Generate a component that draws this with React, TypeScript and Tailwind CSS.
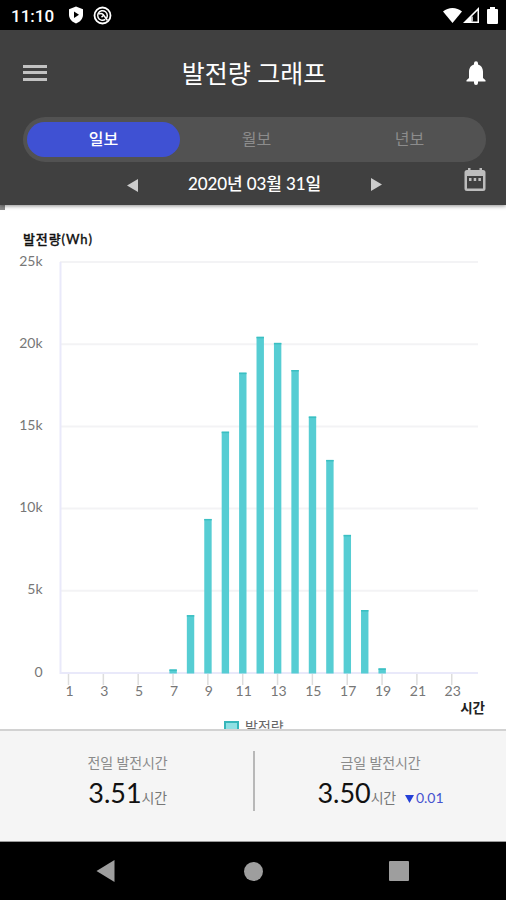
import { ReactNode, useState } from 'react';

const hourly = [
  { hour: 7, wh: 215 },
  { hour: 8, wh: 3520 },
  { hour: 9, wh: 9370 },
  { hour: 10, wh: 14680 },
  { hour: 11, wh: 18270 },
  { hour: 12, wh: 20450 },
  { hour: 13, wh: 20080 },
  { hour: 14, wh: 18430 },
  { hour: 15, wh: 15600 },
  { hour: 16, wh: 12960 },
  { hour: 17, wh: 8400 },
  { hour: 18, wh: 3830 },
  { hour: 19, wh: 280 },
];

const yTicks = [
  { value: 25000, label: '25k' },
  { value: 20000, label: '20k' },
  { value: 15000, label: '15k' },
  { value: 10000, label: '10k' },
  { value: 5000, label: '5k' },
  { value: 0, label: '0' },
];

const xTicks = [1, 3, 5, 7, 9, 11, 13, 15, 17, 19, 21, 23];

const tabs = ['일보', '월보', '년보'];

const xOf = (hour: number) => 68.5 + (hour - 1) * 17.42;
const yOf = (wh: number) => 468 - (wh / 25000) * 411;

const StatusBar = () => (
  <div className="flex h-[30px] shrink-0 items-center justify-between bg-black pl-[11px] pr-2 text-white">
    <div className="flex items-center">
      <span className="w-[43px] whitespace-nowrap pt-[3px] font-['Roboto'] text-[17px] font-medium leading-none">11:10</span>
      <svg className="ml-[14px] h-[18px] w-4" viewBox="0 0 16 18">
        <path d="M8 .5 15 3.2v5.6c0 4-3 7.3-7 8.7-4-1.4-7-4.7-7-8.7V3.2z" fill="#fff" />
        <path d="m6 5.6 5 3.2-5 3.2z" fill="#000" />
      </svg>
      <svg className="ml-[9px] h-[19px] w-[19px]" viewBox="0 0 19 19" fill="none" stroke="#fff">
        <circle cx="9.5" cy="9.5" r="8" strokeWidth="1.8" />
        <path d="M12.300 13.400A4.800 4.800 0 1 1 14.300 9.500c0 1.200-.3 2-.9 2.800" strokeWidth="1.500" />
        <path d="M6 8.200c1.500-1.200 3-.8 4.200.3L14.500 14.500M8.500 11.200l2.500-2.400" strokeWidth="1.500" />
      </svg>
    </div>
    <div className="flex items-center">
      <svg className="h-4 w-[19px]" viewBox="0 0 19 16">
        <path d="M0 4.5C5.300-.3 13.700-.3 19 4.500L9.500 16z" fill="#fff" />
      </svg>
      <svg className="ml-px h-4 w-4" viewBox="0 0 16 16">
        <path d="M16 0v16H0zM14.500 3.700 8.700 9.500v4.900h5.800z" fill="#fff" fillRule="evenodd" />
        <path d="M8.700 9.500h1.300v5H8.700z" fill="#fff" opacity="0.7" />
      </svg>
      <svg className="ml-2 h-[17px] w-[11px]" viewBox="0 0 11 17">
        <path d="M3 0h5v2h2a1 1 0 0 1 1 1v13a1 1 0 0 1-1 1H1a1 1 0 0 1-1-1V3a1 1 0 0 1 1-1h2z" fill="#fff" />
      </svg>
    </div>
  </div>
);

interface HeaderProps {
  active: number;
  onChange: (index: number) => void;
}

const Header = ({ active, onChange }: HeaderProps) => (
  <header className="relative z-10 flex h-[175px] shrink-0 flex-col bg-[#404040] shadow-[0_1px_4px_rgba(0,0,0,0.45)]">
    <div className="grid h-[87px] grid-cols-[1fr_auto_1fr] items-center pb-[2px] pl-[23px] pr-5">
      <button aria-label="메뉴" className="flex w-6 flex-col gap-[3.5px]">
        <span className="h-[3px] w-6 bg-[#c2c2c2]" />
        <span className="h-[3px] w-6 bg-[#c2c2c2]" />
        <span className="h-[3px] w-6 bg-[#c2c2c2]" />
      </button>
      <h1 className="mr-px whitespace-nowrap pt-px text-[25px] font-normal leading-none text-white">발전량 그래프</h1>
      <button aria-label="알림" className="justify-self-end">
        <svg className="h-6 w-5" viewBox="0 0 20 24">
          <path
            d="M10 24a2 2 0 0 0 2-2V20.500h7.500v-1.200L17 17v-6.200c0-3.700-1.800-6.600-5-7.400V2.300a2 2 0 0 0-4 0v1.100c-3.200.8-5 3.700-5 7.400V17L.5 19.300v1.200H8V22a2 2 0 0 0 2 2z"
            fill="#fff"
          />
        </svg>
      </button>
    </div>
    <div className="ml-[23px] flex h-[45px] w-[463px] rounded-full bg-[#525252] py-[5px] pl-1">
      {tabs.map((tab, i) => (
        <button
          key={tab}
          onClick={() => onChange(i)}
          className={`flex-1 rounded-full pb-px text-[16px] leading-none ${
            active === i ? 'bg-[#3f51d3] font-medium text-white' : 'text-[#8c8c8c]'
          }`}
        >
          {tab}
        </button>
      ))}
    </div>
    <div className="grid h-[43px] grid-cols-[1fr_auto_1fr] items-center pl-[23px] pr-5">
      <button aria-label="이전" className="mr-[50px] mt-[3px] justify-self-end">
        <svg className="h-[13px] w-[11px]" viewBox="0 0 11 13">
          <path d="M11 0v13L0 6.500z" fill="#ccc" />
        </svg>
      </button>
      <span className="whitespace-nowrap text-[17px] font-medium leading-none tracking-[-0.1px] text-white">2020년 03월 31일</span>
      <div className="flex items-center justify-between pl-[50px]">
        <button aria-label="다음" className="mt-[2px]">
          <svg className="h-[13px] w-[11px]" viewBox="0 0 11 13">
            <path d="M0 0v13L11 6.500z" fill="#ccc" />
          </svg>
        </button>
        <button aria-label="달력" className="-mt-[7px]">
          <svg className="h-6 w-[22px]" viewBox="0 0 22 24">
            <path
              d="M4 0h2.500v2h9V0H18v2h1a2.500 2.500 0 0 1 2.500 2.500v16A2.500 2.500 0 0 1 19 23H3A2.500 2.500 0 0 1 .5 20.500v-16A2.500 2.500 0 0 1 3 2h1zM3 8v12.500h16V8z"
              fill="#bdbdbd"
              fillRule="evenodd"
            />
            <path d="M5 10h2.500v3H5zM9.700 10h2.500v3H9.700zM14.400 10h2.500v3h-2.500z" fill="#bdbdbd" />
          </svg>
        </button>
      </div>
    </div>
  </header>
);

const Chart = () => (
  <main className="relative h-[524px] shrink-0 overflow-hidden bg-white">
    <svg width="506" height="524" viewBox="0 0 506 524">
      <rect x="0" y="0" width="5" height="5" fill="#8a8a8a" />
      <text x="23" y="39" fontSize="13" fontWeight="500" textLength="69" stroke="#111" strokeWidth="0.3" fill="#111">
        발전량(Wh)
      </text>
      {yTicks.map((t) => (
        <g key={t.value}>
          {t.value > 0 && <path d={`M60 ${yOf(t.value)}H478`} stroke="#f3f3f5" strokeWidth="2" />}
          <text x="42.5" y={yOf(t.value) + 3.5} textAnchor="end" fontSize="14" fill="#777">
            {t.label}
          </text>
        </g>
      ))}
      <path d="M60.500 57V468H478" fill="none" stroke="#e9e9fa" strokeWidth="2" />
      {xTicks.map((h) => (
        <g key={h}>
          <path d={`M${xOf(h)} 469V480`} stroke="#ddd" strokeWidth="1.5" />
          <text x={xOf(h) + 1} y="491" textAnchor="middle" fontSize="14" fill="#777">
            {h}
          </text>
        </g>
      ))}
      {hourly.map(({ hour, wh }) => (
        <g key={hour}>
          <rect x={xOf(hour) - 3.600} y={yOf(wh)} width="7.400" height={468.500 - yOf(wh)} fill="#56cdd3" />
          <rect x={xOf(hour) - 3.600} y={yOf(wh)} width="7.400" height="1.500" fill="#3bbfc2" />
        </g>
      ))}
      <text x="485" y="508" textAnchor="end" fontSize="13.500" fontWeight="700" fill="#222">
        시간
      </text>
      {/* the legend runs under the summary panel */}
      <rect x="225" y="517" width="13" height="13" fill="#8ee0e3" stroke="#35b6ba" strokeWidth="2" />
      <text x="245" y="527" fontSize="14" fill="#666">
        발전량
      </text>
    </svg>
  </main>
);

interface SummaryProps {
  label: string;
  value: string;
  children?: ReactNode;
}

const Summary = ({ label, value, children }: SummaryProps) => (
  <div className="flex flex-1 flex-col items-center pt-[23px]">
    <span className="text-[14px] leading-[18px] tracking-[-0.1px] text-[#8a8a8a]">{label}</span>
    <div className="mt-1 flex items-baseline leading-[34px]">
      <span className="text-[27px] text-[#111]">{value}</span>
      <span className="text-[14px] tracking-[-0.3px] text-[#777]">시간</span>
      {children}
    </div>
  </div>
);

const NavBar = () => (
  <nav className="flex h-[58px] shrink-0 items-center justify-between bg-black pl-[96px] pr-[97px]">
    <svg className="h-[22px] w-[19px]" viewBox="0 0 19 22">
      <path d="M18.500 0v22L.5 11z" fill="#9e9e9e" />
    </svg>
    <span className="ml-[2px] h-[19px] w-[19px] rounded-full bg-[#9e9e9e]" />
    <span className="h-[20px] w-5 rounded-[1px] bg-[#9e9e9e]" />
  </nav>
);

export default function App() {
  const [active, setActive] = useState(0);

  return (
    <div className="flex h-[900px] w-[506px] flex-col overflow-hidden bg-white font-['Lato','Noto_Sans_CJK_KR',sans-serif]">
      <StatusBar />
      <Header active={active} onChange={setActive} />
      <Chart />
      <section className="flex h-[113px] shrink-0 border-b border-t-2 border-b-[#999] border-t-[#d2d2d2] bg-[#f5f5f5] pl-[2px]">
        <Summary label="전일 발전시간" value="3.51" />
        <div className="mt-5 h-[60px] w-[2px] bg-[#b8b8b8]" />
        <Summary label="금일 발전시간" value="3.50">
          <span className="ml-[9px] flex items-baseline text-[14px] text-[#4653d0]">
            <svg className="mr-0.5 h-2 w-[9px]" viewBox="0 0 9 8">
              <path d="M0 0h9L4.500 8z" fill="#2440d8" />
            </svg>
            0.01
          </span>
        </Summary>
      </section>
      <NavBar />
    </div>
  );
}
